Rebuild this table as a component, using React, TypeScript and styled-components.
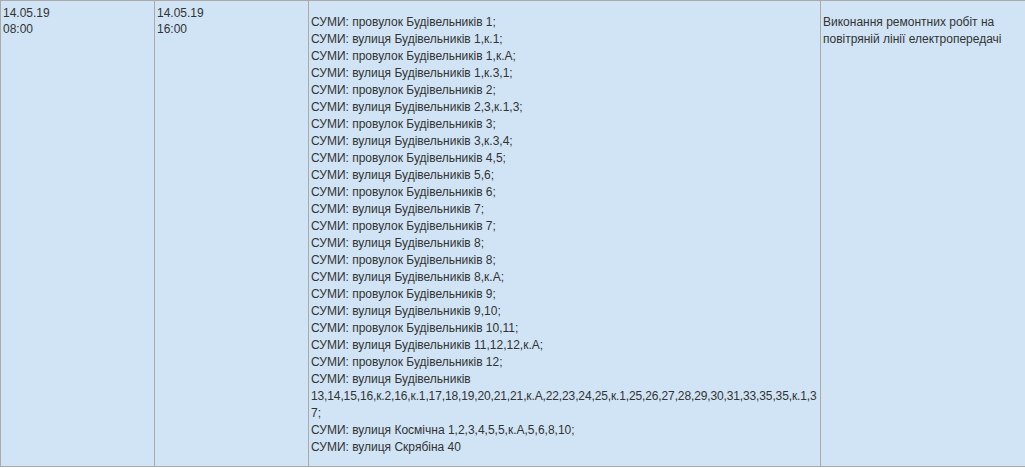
import React from 'react';
import styled, { createGlobalStyle } from 'styled-components';

const GlobalStyle = createGlobalStyle`
    html, body {
        margin: 0;
        padding: 0;
        background: #ffffff;
        overflow: hidden;
    }
`;

const Table = styled.table`
    width: 1040px;
    border-collapse: collapse;
    table-layout: fixed;
    font-family: 'Liberation Sans', Arial, sans-serif;
    font-size: 12px;
    color: #333333;
`;

const Cell = styled.td<{ $wide?: boolean }>`
    border: 1px solid #aaaaaa;
    background: #d0e4f5;
    vertical-align: top;
    overflow-wrap: break-word;
    padding: ${({ $wide }) => ($wide ? '13px 2px 10px' : '4px 2px')};
    line-height: ${({ $wide }) => ($wide ? '17px' : '16px')};
`;

const Line = styled.div<{ $tight?: boolean }>`
    white-space: ${({ $tight }) => ($tight ? 'nowrap' : 'normal')};
    letter-spacing: ${({ $tight }) => ($tight ? '-0.13px' : 'normal')};
`;

// the long house list wraps inside the cell, kept as separate lines so the break matches
const addresses = [
    'СУМИ: провулок Будівельників 1;',
    'СУМИ: вулиця Будівельників 1,к.1;',
    'СУМИ: провулок Будівельників 1,к.А;',
    'СУМИ: вулиця Будівельників 1,к.3,1;',
    'СУМИ: провулок Будівельників 2;',
    'СУМИ: вулиця Будівельників 2,3,к.1,3;',
    'СУМИ: провулок Будівельників 3;',
    'СУМИ: вулиця Будівельників 3,к.3,4;',
    'СУМИ: провулок Будівельників 4,5;',
    'СУМИ: вулиця Будівельників 5,6;',
    'СУМИ: провулок Будівельників 6;',
    'СУМИ: вулиця Будівельників 7;',
    'СУМИ: провулок Будівельників 7;',
    'СУМИ: вулиця Будівельників 8;',
    'СУМИ: провулок Будівельників 8;',
    'СУМИ: вулиця Будівельників 8,к.А;',
    'СУМИ: провулок Будівельників 9;',
    'СУМИ: вулиця Будівельників 9,10;',
    'СУМИ: провулок Будівельників 10,11;',
    'СУМИ: вулиця Будівельників 11,12,12,к.А;',
    'СУМИ: провулок Будівельників 12;',
    'СУМИ: вулиця Будівельників',
    '13,14,15,16,к.2,16,к.1,17,18,19,20,21,21,к.А,22,23,24,25,к.1,25,26,27,28,29,30,31,33,35,35,к.1,3',
    '7;',
    'СУМИ: вулиця Космічна 1,2,3,4,5,5,к.А,5,6,8,10;',
    'СУМИ: вулиця Скрябіна 40',
];

export default function App() {
    return (
        <>
            <GlobalStyle />
            <Table>
                <colgroup>
                    <col style={{ width: 154 }} />
                    <col style={{ width: 154 }} />
                    <col style={{ width: 512 }} />
                    <col />
                </colgroup>
                <tbody>
                    <tr>
                        <Cell>
                            <Line>14.05.19</Line>
                            <Line>08:00</Line>
                        </Cell>
                        <Cell>
                            <Line>14.05.19</Line>
                            <Line>16:00</Line>
                        </Cell>
                        <Cell $wide>
                            {addresses.map(a => (
                                <Line key={a} $tight={a.length > 80}>
                                    {a}
                                </Line>
                            ))}
                        </Cell>
                        <Cell $wide>Виконання ремонтних робіт на повітряній лінії електропередачі</Cell>
                    </tr>
                </tbody>
            </Table>
        </>
    );
}
